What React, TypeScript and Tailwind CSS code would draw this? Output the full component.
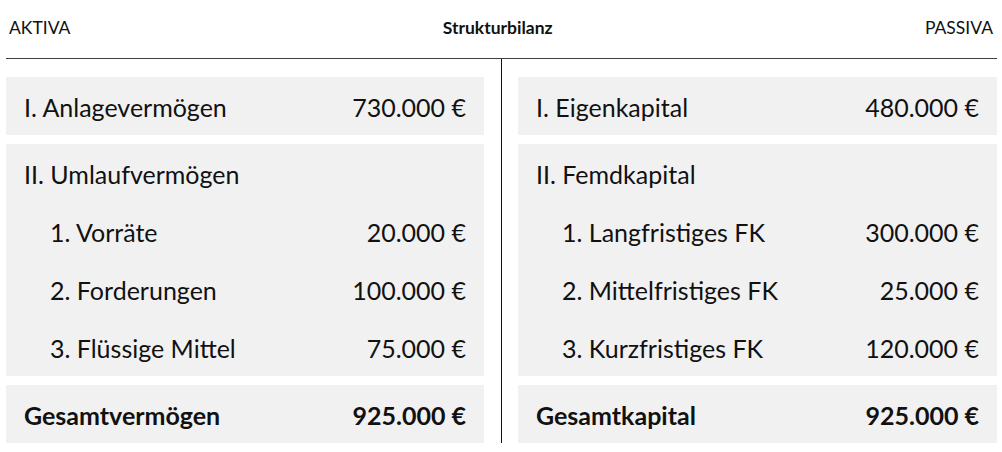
const font = { fontFamily: "Lato, 'Open Sans', sans-serif" };

type Item = { label: string; value: string };

const Row = ({ label, value, indent = false, bold = false }: { label: string; value?: string; indent?: boolean; bold?: boolean }) => (
  <div className={`h-[58px] flex items-center justify-between pt-[3px] pr-[18px] ${indent ? 'pl-[44px]' : 'pl-[18px]'} ${bold ? 'font-bold' : ''}`}>
    <span>{label}</span>
    {value && <span>{value}</span>}
  </div>
);

const Side = ({ first, groupTitle, items, total }: { first: Item; groupTitle: string; items: Item[]; total: Item }) => (
  <div className="flex flex-col gap-[9px] pt-[18px] text-[25px] text-[#111]">
    <div className="bg-[#f1f1f1]">
      <Row label={first.label} value={first.value} />
    </div>
    <div className="bg-[#f1f1f1]">
      <Row label={groupTitle} />
      {items.map((item) => (
        <Row key={item.label} label={item.label} value={item.value} indent />
      ))}
    </div>
    <div className="bg-[#f1f1f1]">
      <Row label={total.label} value={total.value} bold />
    </div>
  </div>
);

export default function App() {
  return (
    <div className="w-[1002px] h-[452px] bg-white text-[#111]" style={font}>
      {/* Header */}
      <div className="h-[59px] flex flex-col">
        <div className="flex-1 flex items-center justify-between px-[9px] pb-[2px] text-[17.5px]">
          <span>AKTIVA</span>
          <span className="font-bold">Strukturbilanz</span>
          <span>PASSIVA</span>
        </div>
        <div className="mx-[6px] mr-[5px] h-px bg-[#404040]" />
      </div>

      {/* Body */}
      <div className="flex pl-[6px]">
        <div className="w-[478px]">
          <Side
            first={{ label: 'I. Anlagevermögen', value: '730.000 €' }}
            groupTitle="II. Umlaufvermögen"
            items={[
              { label: '1. Vorräte', value: '20.000 €' },
              { label: '2. Forderungen', value: '100.000 €' },
              { label: '3. Flüssige Mittel', value: '75.000 €' },
            ]}
            total={{ label: 'Gesamtvermögen', value: '925.000 €' }}
          />
        </div>
        <div className="ml-[17px] w-px bg-[#111] self-stretch" />
        <div className="ml-[16px] w-[479px]">
          <Side
            first={{ label: 'I. Eigenkapital', value: '480.000 €' }}
            groupTitle="II. Femdkapital"
            items={[
              { label: '1. Langfristiges FK', value: '300.000 €' },
              { label: '2. Mittelfristiges FK', value: '25.000 €' },
              { label: '3. Kurzfristiges FK', value: '120.000 €' },
            ]}
            total={{ label: 'Gesamtkapital', value: '925.000 €' }}
          />
        </div>
      </div>
    </div>
  );
}
